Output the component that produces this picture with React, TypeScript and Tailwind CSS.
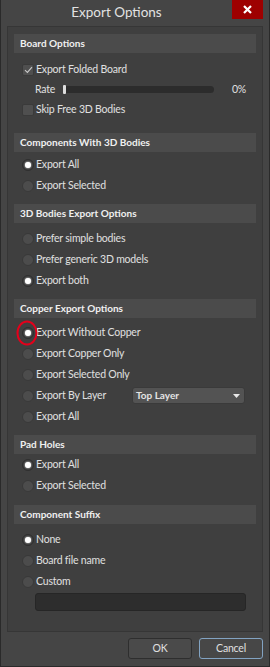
import React from 'react';

const font = { fontFamily: 'Lato, "Noto Sans", sans-serif' };

const Header = ({ title }: { title: string }) => (
  <div className="h-[19px] bg-[#4b4b4b] flex items-center pl-[6px] text-[10px] font-bold text-[#f0f0f0]">
    {title}
  </div>
);

const Radio = ({ label, checked = false }: { label: string; checked?: boolean }) => (
  <div className="h-[21px] flex items-center pl-[8px]">
    <span
      className={
        checked
          ? 'w-[12px] h-[12px] rounded-full bg-[#3a3a3a] border border-[#2f2f2f] flex items-center justify-center'
          : 'w-[12px] h-[12px] rounded-full bg-[#4c4c4c] border border-[#393939]'
      }
    >
      {checked && <span className="w-[6px] h-[6px] rounded-full bg-white shadow-[0_0_2px_#ffffff]" />}
    </span>
    <span className="ml-[2px] text-[10.5px] tracking-[-0.2px] text-[#e0e0e0]">{label}</span>
  </div>
);

const Checkbox = ({ label, checked = false }: { label: string; checked?: boolean }) => (
  <div className="h-full flex items-center pl-[8px]">
    <span className="w-[12px] h-[12px] rounded-[2px] bg-[#4f4f4f] border border-[#3a3a3a] flex items-center justify-center">
      {checked && (
        <svg width="9" height="8" viewBox="0 0 9 8">
          <path d="M1 4.2 L3.4 6.4 L8 1.2" fill="none" stroke="#c9c9c9" strokeWidth="1.1" />
        </svg>
      )}
    </span>
    <span className="ml-[2px] text-[10.5px] tracking-[-0.2px] text-[#e0e0e0]">{label}</span>
  </div>
);

export default function App() {
  return (
    <div
      style={font}
      className="relative w-[270px] h-[667px] bg-[#454545] border-x border-b border-[#2a2a2a] flex flex-col select-none"
    >
      {/* title bar */}
      <div className="relative h-[26px] flex">
        <div className="w-[231px] h-[24px] flex items-center justify-center text-[13.5px] text-[#e2e2e2]">
          Export Options
        </div>
        <div className="absolute top-0 right-[6px] w-[31px] h-[19px] bg-[#9e0000] flex items-center justify-center">
          <svg width="9" height="9" viewBox="0 0 9 9">
            <path d="M1 1 L8 8 M8 1 L1 8" stroke="#ffffff" strokeWidth="2.2" />
          </svg>
        </div>
      </div>

      {/* options panel */}
      <div className="ml-[6px] w-[256px] h-[606px] bg-[#3f3f3f] border border-[#363636] px-[6px] pt-[7px] flex flex-col">
        <Header title="Board Options" />
        <div className="mt-[6px] h-[21px]">
          <Checkbox label="Export Folded Board" checked />
        </div>
        <div className="h-[19px] flex items-center pl-[21px] text-[10.5px] tracking-[-0.2px] text-[#e0e0e0]">
          <span className="w-[28px]">Rate</span>
          <div className="relative w-[151px] h-[7px] rounded-full bg-[#2c2c2c]">
            <span className="absolute left-0 top-[-1px] w-[3px] h-[9px] rounded-[1px] bg-[#dedede]" />
          </div>
          <span className="ml-auto mr-[10px]">0%</span>
        </div>
        <div className="h-[22px]">
          <Checkbox label="Skip Free 3D Bodies" />
        </div>

        <div className="mt-[12px]">
          <Header title="Components With 3D Bodies" />
        </div>
        <div className="mt-[2px]">
          <Radio label="Export All" checked />
          <Radio label="Export Selected" />
        </div>

        <div className="mt-[8px]">
          <Header title="3D Bodies Export Options" />
        </div>
        <div className="mt-[5px]">
          <Radio label="Prefer simple bodies" />
          <Radio label="Prefer generic 3D models" />
          <Radio label="Export both" checked />
        </div>

        <div className="mt-[8px]">
          <Header title="Copper Export Options" />
        </div>
        <div className="relative mt-[4px]">
          <Radio label="Export Without Copper" checked />
          <Radio label="Export Copper Only" />
          <Radio label="Export Selected Only" />
          <div className="flex items-center">
            <div className="w-[118px]">
              <Radio label="Export By Layer" />
            </div>
            <div className="w-[113px] h-[17px] rounded-[3px] bg-[#535353] border border-[#3a3a3a] flex items-center pl-[3px] pr-[4px] text-[10px] font-bold text-[#e4e4e4]">
              Top Layer
              <svg className="ml-auto" width="7" height="4" viewBox="0 0 7 4">
                <path d="M0 0 H7 L3.5 4 Z" fill="#e8e8e8" />
              </svg>
            </div>
          </div>
          <Radio label="Export All" />
          <svg className="absolute left-[2px] top-[-2px]" width="22" height="26" viewBox="0 0 22 26">
            <ellipse cx="11" cy="13" rx="9.5" ry="11.5" fill="none" stroke="#e3001b" strokeWidth="2" />
          </svg>
        </div>

        <div className="mt-[8px]">
          <Header title="Pad Holes" />
        </div>
        <div>
          <Radio label="Export All" checked />
          <Radio label="Export Selected" />
        </div>

        <div className="mt-[9px]">
          <Header title="Component Suffix" />
        </div>
        <div className="mt-[5px]">
          <Radio label="None" checked />
          <Radio label="Board file name" />
          <Radio label="Custom" />
        </div>
        <div className="mt-[1px] ml-[21px] w-[211px] h-[18px] rounded-[3px] bg-[#2d2d2d] border border-[#262626]" />
      </div>

      {/* buttons */}
      <div className="mt-[6px] flex justify-end gap-[7px] pr-[6px]">
        <button className="w-[64px] h-[21px] rounded-[3px] bg-[#4a4a4a] border border-[#2e2e2e] text-[10.5px] tracking-[-0.2px] text-[#e0e0e0]">
          OK
        </button>
        <button className="w-[64px] h-[21px] rounded-[3px] bg-[#474747] border border-[#82a3c2] text-[10.5px] tracking-[-0.2px] text-[#e0e0e0]">
          Cancel
        </button>
      </div>
    </div>
  );
}
